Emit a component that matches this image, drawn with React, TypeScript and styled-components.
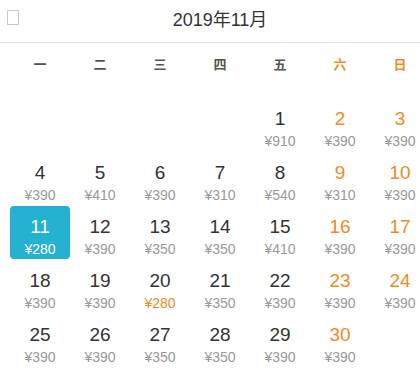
import React from 'react';
import styled, { createGlobalStyle } from 'styled-components';

const GlobalStyle = createGlobalStyle`
  html, body {
    margin: 0;
    padding: 0;
    background: #fff;
    overflow: hidden;
  }
  body {
    font-family: "Liberation Sans", "Noto Sans CJK SC", sans-serif;
  }
`;

const Orange = '#f08a24';
const Teal = '#25b1d1';

const Wrapper = styled.div`
  width: 440px;
`;

const Header = styled.div`
  position: relative;
  height: 42px;
  border-bottom: 1px solid #e2e2e2;
  display: flex;
  align-items: center;
  justify-content: center;
`;

const BackIcon = styled.span`
  position: absolute;
  left: 7px;
  top: 10px;
  width: 10px;
  height: 13px;
  border: 1px solid #c8c8c8;
`;

const Title = styled.h1`
  margin: 0;
  padding-bottom: 6px;
  font-size: 18px;
  font-weight: normal;
  color: #333;
  font-family: "Liberation Sans", "Noto Sans CJK SC", sans-serif;
`;

const WeekRow = styled.div`
  display: grid;
  grid-template-columns: repeat(7, 60px);
  padding: 12px 10px 0;
  height: 43px;
`;

const WeekDay = styled.div<{ $weekend?: boolean }>`
  text-align: center;
  font-size: 13px;
  line-height: 18px;
  font-weight: bold;
  color: ${(p) => (p.$weekend ? Orange : '#555')};
  font-family: "Noto Sans CJK SC", sans-serif;
`;

const Grid = styled.div`
  display: grid;
  grid-template-columns: repeat(7, 60px);
  grid-auto-rows: 54px;
  padding: 0 10px;
`;

const Cell = styled.div<{ $selected?: boolean }>`
  display: flex;
  flex-direction: column;
  align-items: center;
  height: 53px;
  padding-top: 8px;
  box-sizing: border-box;
  border-radius: 4px;
  background: ${(p) => (p.$selected ? Teal : 'transparent')};
`;

const DayNum = styled.span<{ $weekend?: boolean; $selected?: boolean }>`
  font-size: 19px;
  line-height: 26px;
  color: ${(p) => (p.$selected ? '#fff' : p.$weekend ? Orange : '#333')};
`;

const Price = styled.span<{ $low?: boolean; $selected?: boolean }>`
  font-size: 14px;
  line-height: 18px;
  color: ${(p) => (p.$selected ? '#fff' : p.$low ? Orange : '#999')};
`;

const weekDays = ['一', '二', '三', '四', '五', '六', '日'];

const prices: Record<number, number> = {
  1: 910, 2: 390, 3: 390,
  4: 390, 5: 410, 6: 390, 7: 310, 8: 540, 9: 310, 10: 390,
  11: 280, 12: 390, 13: 350, 14: 350, 15: 410, 16: 390, 17: 390,
  18: 390, 19: 390, 20: 280, 21: 350, 22: 390, 23: 390, 24: 390,
  25: 390, 26: 390, 27: 350, 28: 350, 29: 390, 30: 390,
};

const offset = 4;

export default function App() {
  const cells: (number | null)[] = [];
  for (let i = 0; i < offset; i++) cells.push(null);
  for (let d = 1; d <= 30; d++) cells.push(d);

  return (
    <Wrapper>
      <GlobalStyle />
      <Header>
        <BackIcon />
        <Title>2019年11月</Title>
      </Header>
      <WeekRow>
        {weekDays.map((w, i) => (
          <WeekDay key={w} $weekend={i >= 5}>
            {w}
          </WeekDay>
        ))}
      </WeekRow>
      <Grid>
        {cells.map((d, i) => {
          if (d === null) return <div key={'e' + i} />;
          const weekend = i % 7 >= 5;
          const selected = d === 11;
          return (
            <Cell key={d} $selected={selected}>
              <DayNum $weekend={weekend} $selected={selected}>
                {d}
              </DayNum>
              <Price $low={d === 20} $selected={selected}>
                ¥{prices[d]}
              </Price>
            </Cell>
          );
        })}
      </Grid>
    </Wrapper>
  );
}
